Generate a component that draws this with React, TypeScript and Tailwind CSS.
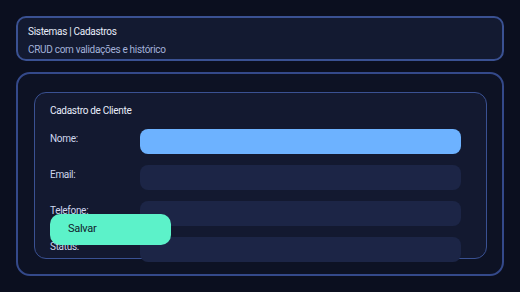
import React from "react";

const fields = [
  { label: "Nome:", active: true },
  { label: "Email:", active: false },
  { label: "Telefone:", active: false },
  { label: "Status:", active: false },
];

export default function App() {
  return (
    <div
      className="w-[520px] h-[292px] overflow-hidden bg-[#0b0f1f] px-4 pt-4 text-[10px] tracking-[-0.3px]"
      style={{ fontFamily: "Roboto, 'Liberation Sans', sans-serif" }}
    >
      {/* Cabeçalho */}
      <div className="h-[45px] rounded-[10px] border-2 border-[#3a5192] bg-[#131a31] pl-[10px] pt-[6px]">
        <div className="leading-4 text-[#e8edfb]">Sistemas | Cadastros</div>
        <div className="mt-[2px] leading-4 text-[#a3b2d9]">CRUD com validações e histórico</div>
      </div>

      {/* Painel principal */}
      <div className="mt-[11px] h-[204px] rounded-[14px] border-2 border-[#34498a] bg-[#0d1224] pl-4 pr-[15px] pt-[18px]">
        <div className="relative h-[167px] rounded-[12px] border border-[#3a5192] bg-[#131930] pl-[15px] pt-[10px]">
          <div className="leading-4 text-[#e8edfb]">Cadastro de Cliente</div>
          <div className="mt-[10px] flex flex-col gap-[11px]">
            {fields.map((f) => (
              <div key={f.label} className="flex h-[25px] items-start">
                <div className="w-[90px] pt-[2px] leading-4 text-[#cfd7ee]">{f.label}</div>
                <div
                  className={
                    f.active
                      ? "h-[25px] w-[321px] rounded-[8px] bg-[#6db2ff]"
                      : "h-[25px] w-[321px] rounded-[8px] bg-[#1c2546]"
                  }
                />
              </div>
            ))}
          </div>
          {/* Botão sobreposto */}
          <button className="absolute left-[15px] top-[121px] flex h-[31px] w-[121px] items-center rounded-[10px] bg-[#5cf2c9] pl-[18px] text-[11px] text-[#10202b]">
            Salvar
          </button>
        </div>
      </div>
    </div>
  );
}
